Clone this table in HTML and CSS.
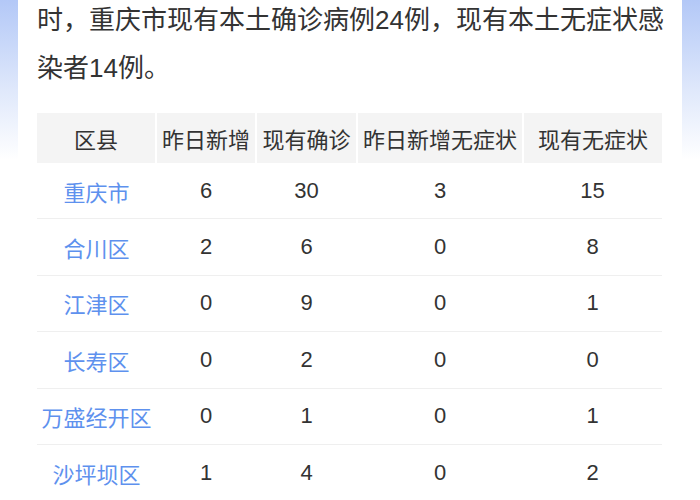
FILE: index.html
```html
<!DOCTYPE html>
<html lang="zh-CN">
<head>
<meta charset="utf-8">
<title>重庆疫情</title>
<link rel="stylesheet" href="styles.css">
</head>
<body>
<div class="card">
  <p class="lead">时，重庆市现有本土确诊病例24例，现有本土无症状感染者14例。</p>
  <table class="data">
    <colgroup>
      <col class="c1"><col class="c2"><col class="c3"><col class="c4"><col class="c5">
    </colgroup>
    <thead>
      <tr><th>区县</th><th>昨日新增</th><th>现有确诊</th><th>昨日新增无症状</th><th>现有无症状</th></tr>
    </thead>
    <tbody>
      <tr><td class="name">重庆市</td><td>6</td><td>30</td><td>3</td><td>15</td></tr>
      <tr><td class="name">合川区</td><td>2</td><td>6</td><td>0</td><td>8</td></tr>
      <tr><td class="name">江津区</td><td>0</td><td>9</td><td>0</td><td>1</td></tr>
      <tr><td class="name">长寿区</td><td>0</td><td>2</td><td>0</td><td>0</td></tr>
      <tr><td class="name">万盛经开区</td><td>0</td><td>1</td><td>0</td><td>1</td></tr>
      <tr><td class="name">沙坪坝区</td><td>1</td><td>4</td><td>0</td><td>2</td></tr>
    </tbody>
  </table>
</div>
</body>
</html>
```
FILE: styles.css
```css
html, body {
  margin: 0;
  padding: 0;
}
body {
  background: linear-gradient(to bottom, #b3c8f7 0px, #dfe8fb 90px, #ffffff 160px) no-repeat;
  background-color: #fff;
  font-family: "Liberation Sans", "Noto Sans CJK SC", sans-serif;
  color: #333;
  height: 500px;
  overflow: hidden;
}
.card {
  margin: 0 18px;
  padding: 0 19px;
  background: #fff;
  min-height: 500px;
  display: flow-root;
}
.lead {
  margin: -4px -6px 21px 0;
  font-size: 26px;
  line-height: 48px;
  color: #333;
}
.data {
  width: 625px;
  border-collapse: collapse;
  table-layout: fixed;
  font-size: 22px;
}
.c1 { width: 119px; }
.c2 { width: 100px; }
.c3 { width: 101px; }
.c4 { width: 166px; }
.c5 { width: 139px; }
.data th {
  height: 50px;
  padding: 0;
  background: #f4f4f4;
  font-weight: normal;
  color: #333;
  border-left: 2px solid #fff;
  text-align: center;
  white-space: nowrap;
}
.data th:first-child {
  border-left: none;
}
.data td {
  height: 55.4px;
  padding: 0;
  text-align: center;
  border-bottom: 1px solid #efefef;
  color: #333;
}
.data td.name {
  color: #5e91ee;
  white-space: nowrap;
}
```
